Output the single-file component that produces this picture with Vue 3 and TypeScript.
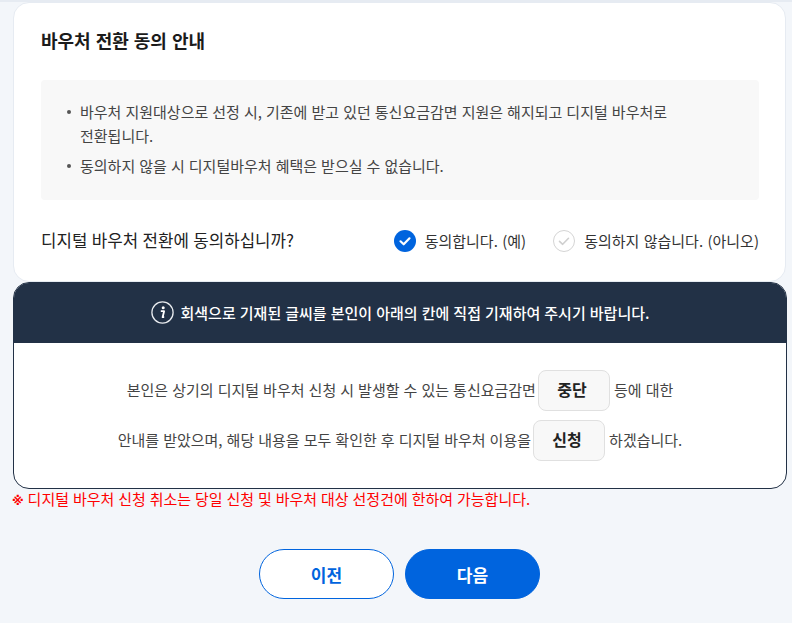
<script setup lang="ts">
const bullets: string[] = [
  '바우처 지원대상으로 선정 시, 기존에 받고 있던 통신요금감면 지원은 해지되고 디지털 바우처로 전환됩니다.',
  '동의하지 않을 시 디지털바우처 혜택은 받으실 수 없습니다.',
]
</script>

<template>
  <div class="page">
    <div class="prev-edge"></div>
    <section class="card">
      <h2 class="title">바우처 전환 동의 안내</h2>
      <ul class="notice">
        <li v-for="b in bullets" :key="b">{{ b }}</li>
      </ul>
      <div class="agree">
        <span class="question">디지털 바우처 전환에 동의하십니까?</span>
        <div class="options">
          <label class="opt">
            <svg class="chk" width="22" height="22" viewBox="0 0 22 22">
              <circle cx="11" cy="11" r="11" fill="#0064de" />
              <path d="M6.5 11.3l3.2 3 5.8-6" fill="none" stroke="#fff" stroke-width="2.2" stroke-linecap="round" stroke-linejoin="round" />
            </svg>
            <span>동의합니다. (예)</span>
          </label>
          <label class="opt">
            <svg class="chk" width="22" height="22" viewBox="0 0 22 22">
              <circle cx="11" cy="11" r="10.5" fill="#fff" stroke="#d4d4d4" />
              <path d="M6.5 11.3l3.2 3 5.8-6" fill="none" stroke="#cfcfcf" stroke-width="1.6" stroke-linecap="round" stroke-linejoin="round" />
            </svg>
            <span>동의하지 않습니다. (아니오)</span>
          </label>
        </div>
      </div>
    </section>
    <section class="confirm">
      <header class="confirm-head">
        <svg width="23" height="23" viewBox="0 0 23 23">
          <circle cx="11.5" cy="11.5" r="10.6" fill="none" stroke="#e6e9ed" stroke-width="1.3" />
          <circle cx="12.2" cy="6.8" r="1.5" fill="#fff" />
          <path d="M9.8 10.2h3.3l-1.5 6h1.6" fill="none" stroke="#fff" stroke-width="1.8" stroke-linejoin="round" />
        </svg>
        <span>회색으로 기재된 글씨를 본인이 아래의 칸에 직접 기재하여 주시기 바랍니다.</span>
      </header>
      <div class="confirm-body">
        <p class="line">본인은 상기의 디지털 바우처 신청 시 발생할 수 있는 통신요금감면 <span class="box">중단</span> 등에 대한</p>
        <p class="line">안내를 받았으며, 해당 내용을 모두 확인한 후 디지털 바우처 이용을 <span class="box">신청</span> 하겠습니다.</p>
      </div>
    </section>
    <p class="warn"><span class="mark">※</span> 디지털 바우처 신청 취소는 당일 신청 및 바우처 대상 선정건에 한하여 가능합니다.</p>
    <div class="actions">
      <button class="btn ghost" type="button">이전</button>
      <button class="btn solid" type="button">다음</button>
    </div>
  </div>
</template>

<style>
html, body { margin: 0; background: #f3f6fa; }
</style>

<style scoped>
.page {
  width: 792px;
  height: 623px;
  overflow: hidden;
  box-sizing: border-box;
  padding: 0 5px 0 13px;
  background: #f3f6fa;
  font-family: "Noto Sans CJK KR", "Noto Sans", sans-serif;
  color: #444;
  word-spacing: 0.7px;
}
.prev-edge {
  height: 2px;
  margin: 0 -5px 0 -13px;
  background: #e6ebf2;
}
.card {
  box-sizing: border-box;
  height: 280px;
  margin-right: 1px;
  padding: 24px 26px 0 27px;
  background: #fff;
  border: 1px solid #e6ebf2;
  border-radius: 16px;
}
.title {
  margin: 0;
  font-size: 18px;
  line-height: 26px;
  font-weight: 700;
  word-spacing: 0.9px;
  color: #1b1b1b;
}
.notice {
  list-style: none;
  margin: 27px 0 0;
  padding: 20px 91px 20px 25px;
  height: 120px;
  box-sizing: border-box;
  background: #f8f8f8;
  border-radius: 4px;
  font-size: 15px;
  line-height: 24px;
}
.notice li { position: relative; padding-left: 14px; margin-bottom: 6px; }
.notice li::before {
  content: "";
  position: absolute;
  left: 1px;
  top: 10px;
  width: 4px;
  height: 4px;
  border-radius: 50%;
  background: #555;
}
.agree {
  display: flex;
  align-items: center;
  justify-content: space-between;
  margin-top: 28px;
  height: 24px;
}
.question { font-size: 16.8px; color: #222; }
.options { display: flex; gap: 27px; }
.opt {
  display: flex;
  align-items: center;
  gap: 9px;
  font-size: 15px;
  color: #333;
  word-spacing: 1px;
}
.chk { flex: none; margin-top: 1px; }
.confirm {
  box-sizing: border-box;
  height: 207px;
  background: #fff;
  border: 1px solid #223146;
  border-radius: 16px;
  overflow: hidden;
}
.confirm-head {
  display: flex;
  align-items: center;
  justify-content: center;
  gap: 7px;
  box-sizing: border-box;
  height: 60px;
  padding-bottom: 2px;
  background: #223146;
  color: #fff;
  font-size: 15px;
  font-weight: 500;
}
.confirm-body { padding: 27px 0 0; text-align: center; }
.line {
  margin: 0 0 9px;
  height: 41px;
  line-height: 39px;
  font-size: 15px;
  color: #444;
}
.box {
  display: inline-block;
  box-sizing: border-box;
  width: 72px;
  height: 41px;
  margin: 0 0 0 -2px;
  padding-right: 4px;
  font-size: 16px;
  line-height: 37px;
  vertical-align: top;
  background: #f8f8f8;
  border: 1px solid #e0e0e0;
  border-radius: 8px;
  font-weight: 700;
  color: #222;
  text-align: center;
}
.warn {
  margin: -1px 0 0 -1px;
  height: 22px;
  font-size: 15px;
  line-height: 22px;
  word-spacing: 0.55px;
  color: #ff0000;
}
.mark {
  font-family: "DejaVu Sans", sans-serif;
  font-size: 12px;
  line-height: 1;
  font-weight: 700;
}
.actions {
  display: flex;
  justify-content: center;
  gap: 11px;
  margin-top: 39px;
  padding-right: 1px;
}
.btn {
  box-sizing: border-box;
  width: 135px;
  height: 50px;
  border-radius: 25px;
  font-family: inherit;
  font-size: 17px;
  font-weight: 700;
}
.ghost { background: #fff; border: 1px solid #0064de; color: #0064de; }
.solid { background: #0064de; border: 1px solid #0064de; color: #fff; }
</style>
